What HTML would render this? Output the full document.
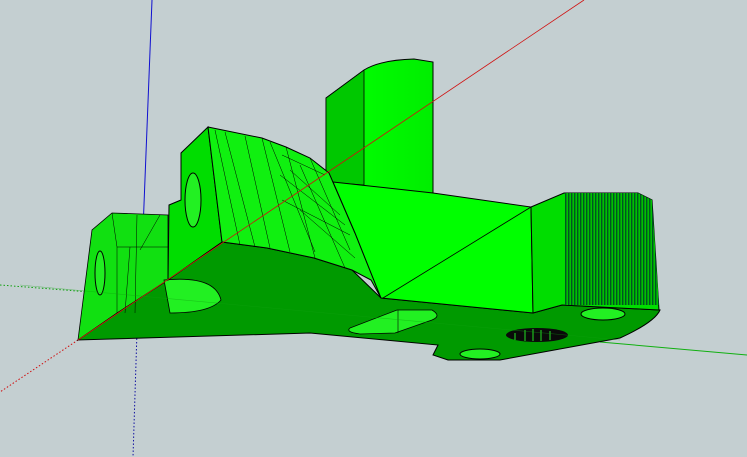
<!DOCTYPE html>
<html><head><style>html,body{margin:0;padding:0;background:#c4cfd1;}svg{display:block}</style></head>
<body>
<svg width="747" height="457" viewBox="0 0 747 457" xmlns="http://www.w3.org/2000/svg">
<defs>
<pattern id="st" width="3" height="7" patternUnits="userSpaceOnUse">
<rect width="3" height="7" fill="#00c000"/><rect x="1" width="1.4" height="7" fill="#052"/>
</pattern>
<linearGradient id="cyl" x1="0" x2="1"><stop offset="0" stop-color="#00c800"/><stop offset="0.15" stop-color="#00ff00"/><stop offset="1" stop-color="#00ee00"/></linearGradient>
</defs>
<rect width="747" height="457" fill="#c4cfd1"/>
<line x1="152" y1="0" x2="143" y2="230" stroke="#1010d0" stroke-width="1"/>
<line x1="138" y1="300" x2="133" y2="457" stroke="#1010a0" stroke-width="1" stroke-dasharray="1.5,2"/>
<line x1="78" y1="340" x2="0" y2="392" stroke="#d01010" stroke-width="1" stroke-dasharray="1.5,2"/>
<line x1="0" y1="285" x2="90" y2="292" stroke="#10a010" stroke-width="1" stroke-dasharray="1.5,2"/>
<line x1="600" y1="342" x2="747" y2="355" stroke="#10b010" stroke-width="1"/>
<path d="M326,98 L364,70 Q380,60 414,59 L433,62 L433,195 L326,182 Z" fill="url(#cyl)" stroke="#000" stroke-width="1"/>
<path d="M326,98 L364,70 L364,185 L326,182 Z" fill="#00c800" stroke="#000" stroke-width="0.8"/>
<path d="M78,340 L117,313 L222,242 L267,248 L314,258 L352,270 L381,298 L533,313 L562,305 L660,310 Q655,322 620,338 L500,360 L448,360 L433,355 L438,345 L310,333 Z" fill="#009a00" stroke="#000" stroke-width="1"/>
<path d="M78,340 L92,230 L112,213 L168,215 L168,280 L117,313 Z" fill="#11e011" stroke="#000" stroke-width="0.8"/>
<path d="M117,313 L117,247 L168,247 M135,313 L137,215 M140,250 L160,215 M117,247 L112,213 M125,313 L130,247" stroke="#000" stroke-width="0.5" fill="none"/>
<ellipse cx="100" cy="273" rx="5" ry="22" fill="#22ee22" stroke="#000"/>
<path d="M164,280 Q215,275 221,300 Q210,313 170,313 Z" fill="#22f022" stroke="#000" stroke-width="0.8"/>
<path d="M168,280 L169,205 L181,200 L181,153 L208,127 L222,242 Z" fill="#00dd00" stroke="#000" stroke-width="1"/>
<ellipse cx="193" cy="200" rx="8" ry="27" fill="#22f022" stroke="#000"/>
<path d="M208,127 L262,138 L286,147 L310,158 L329,173 L355,233 L381,298 L371,280 L352,270 L314,258 L267,248 L222,242 Z" fill="#10f010" stroke="#000" stroke-width="1"/>
<path d="M215,130 L240,245 M225,132 L255,247 M245,136 L270,248 M262,138 L290,252 M270,142 L315,252 M282,155 L325,175 M280,175 L345,225 M282,200 L350,235 M300,210 L355,258 M286,147 L315,258 M300,165 L345,268 M290,170 L340,215 M310,158 L350,250" stroke="#000" stroke-width="0.5" fill="none"/>
<path d="M333,182 L433,193 L531,207 L533,313 L381,298 L355,233 Z" fill="#00ff00" stroke="#000" stroke-width="1"/>
<line x1="531" y1="207" x2="383" y2="298" stroke="#000" stroke-width="0.8"/>
<path d="M531,207 L564,193 L638,193 L652,200 L659,310 L562,305 L533,313 Z" fill="#00dd00" stroke="#000" stroke-width="1"/>
<path d="M565,193 L638,193 L652,200 L659,305 L565,305 Z" fill="url(#st)"/>
<path d="M350,328 L397,310 L432,310 Q442,316 432,320 L395,333 L360,334 Q345,332 350,328 Z" fill="#22f022" stroke="#000" stroke-width="0.8"/>
<line x1="398" y1="310" x2="398" y2="333" stroke="#000" stroke-width="0.6"/>
<ellipse cx="480" cy="354" rx="20" ry="5" fill="#22f022" stroke="#000"/>
<ellipse cx="537" cy="335" rx="31" ry="7" fill="#0a0a0a"/>
<path d="M515,333 L515,340 M525,330 L525,341 M533,329 L533,341 M541,330 L541,341 M550,331 L550,340" stroke="#22e022" stroke-width="1"/>
<ellipse cx="603" cy="314" rx="22" ry="6" fill="#22f022" stroke="#000"/>
<line x1="584" y1="0" x2="78" y2="340" stroke="#d01010" stroke-width="0.8"/>
<line x1="20" y1="285" x2="620" y2="340" stroke="#10a010" stroke-width="0.6" opacity="0.5"/>
</svg>
</body></html>
